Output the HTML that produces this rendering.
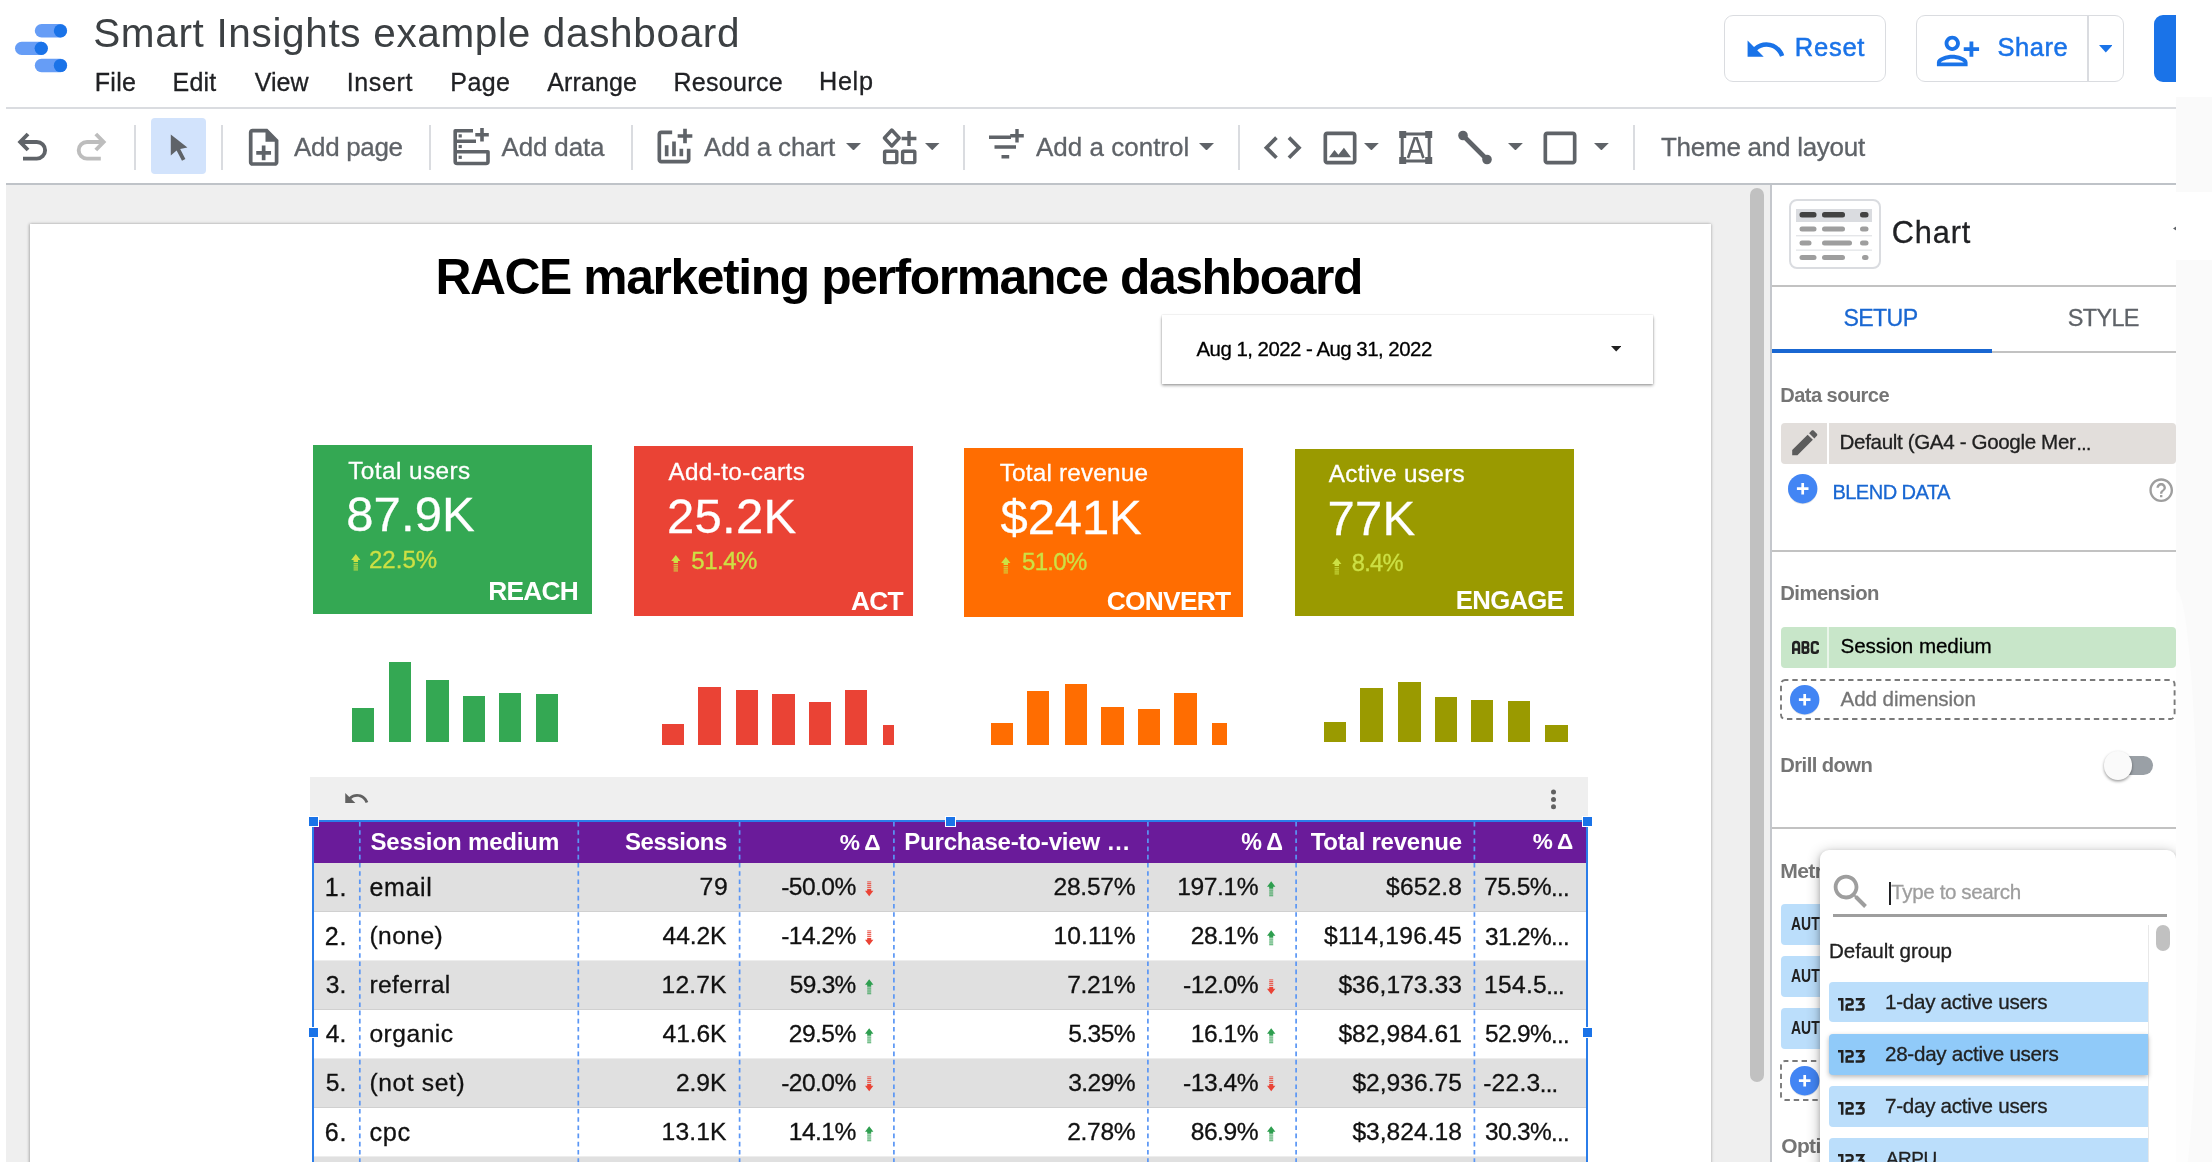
<!DOCTYPE html>
<html><head><meta charset="utf-8"><title>Smart Insights example dashboard</title>
<style>
html,body{margin:0;padding:0;background:#fff;}
body{width:2212px;height:1162px;overflow:hidden;position:relative;font-family:"Liberation Sans", sans-serif;}
#r{position:absolute;left:0;top:0;width:2212px;height:1162px;overflow:hidden;will-change:transform;}
#r div,#r svg,#r span{position:absolute;box-sizing:border-box;}
#r span{white-space:nowrap;line-height:1;-webkit-text-stroke:0.3px currentColor;}
</style></head>
<body><div id="r">
<div style="left:6px;top:106.5px;width:2170px;height:2px;background:#dadce0;"></div>
<div style="left:6px;top:183px;width:2170px;height:2px;background:#bfc3c8;"></div>
<div style="left:2176px;top:97px;width:36px;height:95px;background:#fafafa;"></div>
<div style="left:6px;top:185px;width:1765px;height:980px;background:#efefef;"></div>
<div style="left:30px;top:223.5px;width:1681px;height:945px;background:#ffffff;box-shadow:0 0 4px rgba(0,0,0,.13),-1px 0 2.5px rgba(0,0,0,.2),1px 0 2px rgba(0,0,0,.08);"></div>
<div style="left:1749.5px;top:188px;width:14.5px;height:894px;background:#c1c1c1;border-radius:7px;"></div>
<div style="left:1770px;top:185px;width:2px;height:980px;background:#c4c7cc;"></div>
<div style="left:1772px;top:185px;width:404px;height:980px;background:#ffffff;"></div>
<svg style="left:10px;top:18px;" width="64" height="60" viewBox="10 18 64 60">
<rect x="34.8" y="24" width="32.4" height="13.6" rx="6.8" fill="#669df6"/>
<circle cx="60.4" cy="30.8" r="6.6" fill="#1a73e8"/>
<rect x="15" y="41.7" width="32.9" height="13.2" rx="6.6" fill="#669df6"/>
<circle cx="41.2" cy="48.3" r="6.6" fill="#1a73e8"/>
<rect x="34.8" y="58.8" width="32.4" height="13.4" rx="6.7" fill="#669df6"/>
<circle cx="60.4" cy="65.5" r="6.6" fill="#1a73e8"/>
</svg>
<span style="left:93.2px;top:12.9px;font-size:40.50px;color:#3c4043;letter-spacing:0.661px;-webkit-text-stroke:0;">Smart Insights example dashboard</span>
<span style="left:94.7px;top:69.5px;font-size:25.00px;color:#202124;letter-spacing:0.307px;">File</span>
<span style="left:172.5px;top:69.5px;font-size:25.00px;color:#202124;letter-spacing:0.222px;">Edit</span>
<span style="left:254.7px;top:69.5px;font-size:25.00px;color:#202124;letter-spacing:0.006px;">View</span>
<span style="left:346.7px;top:69.5px;font-size:25.00px;color:#202124;letter-spacing:0.664px;">Insert</span>
<span style="left:450.3px;top:69.5px;font-size:25.00px;color:#202124;letter-spacing:0.406px;">Page</span>
<span style="left:547.3px;top:69.5px;font-size:25.00px;color:#202124;letter-spacing:0.127px;">Arrange</span>
<span style="left:673.4px;top:69.5px;font-size:25.00px;color:#202124;letter-spacing:0.316px;">Resource</span>
<span style="left:819.0px;top:69.4px;font-size:25.19px;color:#202124;letter-spacing:0.705px;">Help</span>
<div style="left:1723.5px;top:15px;width:162px;height:66.5px;border:1.5px solid #dadce0;border-radius:9px;background:#fff"></div>
<svg style="left:1743.5px;top:27.5px;" width="43" height="43" viewBox="0 0 24 24"><path fill="#1a73e8" d="M12.5 8c-2.65 0-5.05.99-6.9 2.6L2 7v9h9l-3.62-3.62c1.39-1.16 3.16-1.88 5.12-1.88 3.54 0 6.55 2.31 7.6 5.5l2.37-.78C21.08 11.03 17.15 8 12.5 8z"/></svg>
<span style="left:1794.8px;top:34.7px;font-size:25.58px;color:#1a73e8;letter-spacing:0.716px;-webkit-text-stroke:0.5px #1a73e8;">Reset</span>
<div style="left:1915.5px;top:15px;width:208.5px;height:66.5px;border:1.5px solid #dadce0;border-radius:9px;background:#fff"></div>
<div style="left:2087px;top:16px;width:1.5px;height:64.5px;background:#dadce0;"></div>
<svg style="left:1934.5px;top:27.5px;" width="46" height="46" viewBox="0 0 24 24"><path fill="#1a73e8" d="M13 8c0-2.21-1.79-4-4-4S5 5.79 5 8s1.79 4 4 4 4-1.79 4-4zm-2 0c0 1.1-.9 2-2 2s-2-.9-2-2 .9-2 2-2 2 .9 2 2zM1 18v2h16v-2c0-2.66-5.33-4-8-4s-8 1.34-8 4zm2 0c.2-.71 3.3-2 6-2 2.69 0 5.78 1.28 6 2H3zm17-3v-3h3v-2h-3V7h-2v3h-3v2h3v3h2z"/></svg>
<span style="left:1997.6px;top:34.8px;font-size:25.50px;color:#1a73e8;letter-spacing:0.484px;-webkit-text-stroke:0.5px #1a73e8;">Share</span>
<svg style="left:2098.5px;top:45px;" width="13.6" height="7.6" viewBox="0 0 10 5.6"><path fill="#1a73e8" d="M0 0h10L5 5.6z"/></svg>
<div style="left:2153.5px;top:15px;width:40px;height:66.5px;border-radius:9px;background:#1a73e8"></div>
<div style="left:2176px;top:0px;width:36px;height:97px;background:#ffffff;"></div>
<svg style="left:14px;top:128px;" width="38" height="38" viewBox="14 128 38 38"><path d="M28 134 L20.2 142 L28 150 M21 142 H36.8 a8.3 8.3 0 0 1 0 16.6 H23" fill="none" stroke="#5f6368" stroke-width="3.9" stroke-linejoin="miter"/></svg>
<svg style="left:72px;top:128px;" width="38" height="38" viewBox="72 128 38 38"><path d="M95.8 134 L103.6 142 L95.8 150 M102.8 142 H87 a8.3 8.3 0 0 0 0 16.6 H100.8" fill="none" stroke="#bdbdbd" stroke-width="3.9" stroke-linejoin="miter"/></svg>
<div style="left:134px;top:125px;width:2px;height:45px;background:#dadce0;"></div>
<div style="left:151px;top:118px;width:55px;height:55.8px;border-radius:4px;background:#d2e3fc"></div>
<svg style="left:168px;top:132px;" width="24" height="32" viewBox="168 132 24 32"><path fill="#5f6368" d="M170.8 134.6 L170.8 155.6 L176.6 150.6 L182 160.8 L185.4 159 L180.2 149 L187.4 147.6 Z"/></svg>
<div style="left:221px;top:125px;width:2px;height:45px;background:#dadce0;"></div>
<svg style="left:246.9px;top:127.2px;" width="33.3" height="40.7" viewBox="3 1 18 22"><path fill="#5f6368" d="M13 11h-2v3H8v2h3v3h2v-3h3v-2h-3zm1-9H6c-1.1 0-2 .9-2 2v16c0 1.1.89 2 1.99 2H18c1.1 0 2-.9 2-2V8l-6-6zm4 18H6V4h7v5h5v11z"/></svg>
<span style="left:294.0px;top:134.0px;font-size:26.00px;color:#5f6368;letter-spacing:-0.338px;">Add page</span>
<div style="left:429px;top:125px;width:2px;height:45px;background:#dadce0;"></div>
<svg style="left:450px;top:126px;" width="42" height="42" viewBox="450 126 42 42">
<g fill="none" stroke="#5f6368" stroke-width="3.6" stroke-linejoin="round">
<path d="M473 130.8 H455.2 V161.5 a2 2 0 0 0 2 2 H486 a2 2 0 0 0 2 -2 V151.8 H455.2 M455.2 141.2 H476"/>
<path d="M482 128 V141.5 M475.3 134.8 H488.8"/>
</g>
<rect x="458.6" y="134.3" width="3.2" height="3.2" fill="#5f6368"/><rect x="458.6" y="144.9" width="3.2" height="3.2" fill="#5f6368"/><rect x="458.6" y="155.7" width="3.2" height="3.2" fill="#5f6368"/>
</svg>
<span style="left:501.5px;top:134.0px;font-size:26.00px;color:#5f6368;letter-spacing:-0.161px;">Add data</span>
<div style="left:631px;top:125px;width:2px;height:45px;background:#dadce0;"></div>
<svg style="left:652px;top:124.5px;" width="44" height="44" viewBox="0 0 24 24"><path fill="#5f6368" d="M22 5v2h-3v3h-2V7h-3V5h3V2h2v3h3zm-3 14H5V5h6V3H5c-1.1 0-2 .9-2 2v14c0 1.1.9 2 2 2h14c1.1 0 2-.9 2-2v-6h-2v6zm-4-6v4h2v-4h-2zm-4 4h2V9h-2v8zm-2 0v-6H7v6h2z"/></svg>
<span style="left:704.0px;top:134.0px;font-size:26.00px;color:#5f6368;letter-spacing:-0.175px;">Add a chart</span>
<svg style="left:846px;top:142.5px;" width="15" height="7.5" viewBox="0 0 10 5"><path fill="#5f6368" d="M0 0h10L5 5z"/></svg>
<svg style="left:880px;top:126px;" width="40" height="40" viewBox="880 126 40 40">
<g fill="none" stroke="#5f6368" stroke-width="3.4" stroke-linejoin="round">
<path d="M891.8 130 L899.2 138 L891.8 146 L884.4 138 Z"/>
<rect x="884.6" y="151.2" width="12.2" height="11.4" rx="1"/>
<rect x="902.6" y="151.2" width="12.2" height="11.4" rx="1"/>
<path d="M909 131 V146 M901.6 138.5 H916.4"/>
</g></svg>
<svg style="left:925px;top:142.5px;" width="14.5" height="7.25" viewBox="0 0 10 5"><path fill="#5f6368" d="M0 0h10L5 5z"/></svg>
<div style="left:963px;top:125px;width:2px;height:45px;background:#dadce0;"></div>
<svg style="left:986px;top:126px;" width="42" height="38" viewBox="986 126 42 38">
<g fill="none" stroke="#5f6368" stroke-width="3.4">
<path d="M989 137.3 H1011 M994.5 147 H1016 M1001.5 156.7 H1009.2"/>
<path d="M1017 129 V142.6 M1010.2 135.8 H1023.8"/>
</g></svg>
<span style="left:1036.0px;top:134.0px;font-size:26.00px;color:#5f6368;letter-spacing:0.006px;">Add a control</span>
<svg style="left:1199px;top:142.5px;" width="15" height="7.5" viewBox="0 0 10 5"><path fill="#5f6368" d="M0 0h10L5 5z"/></svg>
<div style="left:1237.5px;top:125px;width:2px;height:45px;background:#dadce0;"></div>
<svg style="left:1259.5px;top:124.8px;" width="45.4" height="45.4" viewBox="0 0 24 24"><path fill="#5f6368" d="M9.4 16.6L4.8 12l4.6-4.6L8 6l-6 6 6 6 1.4-1.4zm5.2 0l4.6-4.6-4.6-4.6L16 6l6 6-6 6-1.4-1.4z"/></svg>
<svg style="left:1317.5px;top:125.5px;" width="44" height="44" viewBox="0 0 24 24"><path fill="#5f6368" d="M19 5v14H5V5h14m0-2H5c-1.1 0-2 .9-2 2v14c0 1.1.9 2 2 2h14c1.1 0 2-.9 2-2V5c0-1.1-.9-2-2-2zm-4.86 8.86l-3 3.87L9 13.14 6 17h12l-3.86-5.14z"/></svg>
<svg style="left:1364px;top:142.5px;" width="14.799999999999955" height="7.399999999999977" viewBox="0 0 10 5"><path fill="#5f6368" d="M0 0h10L5 5z"/></svg>
<svg style="left:1397px;top:129px;" width="38" height="38" viewBox="1397 129 38 38">
<rect x="1402.2" y="134" width="27" height="27" fill="none" stroke="#5f6368" stroke-width="3"/>
<g fill="#5f6368"><rect x="1399.2" y="131" width="7" height="7"/><rect x="1425.2" y="131" width="7" height="7"/><rect x="1399.2" y="157" width="7" height="7"/><rect x="1425.2" y="157" width="7" height="7"/></g>
<path d="M1408 158 L1414.6 138.2 H1416.8 L1423.4 158 M1410.6 151.4 H1420.8" fill="none" stroke="#5f6368" stroke-width="2.6"/>
</svg>
<svg style="left:1455px;top:128px;" width="40" height="40" viewBox="1455 128 40 40"><path d="M1463 135.5 L1487 159.5" stroke="#5f6368" stroke-width="4.6" fill="none"/><circle cx="1463" cy="135.5" r="4.8" fill="#5f6368"/><circle cx="1487" cy="159.5" r="4.8" fill="#5f6368"/></svg>
<svg style="left:1508.4px;top:142.5px;" width="14.899999999999864" height="7.449999999999932" viewBox="0 0 10 5"><path fill="#5f6368" d="M0 0h10L5 5z"/></svg>
<svg style="left:1538px;top:125.5px;" width="44" height="44" viewBox="0 0 24 24"><path fill="#5f6368" d="M19 5v14H5V5h14m0-2H5c-1.1 0-2 .9-2 2v14c0 1.1.9 2 2 2h14c1.1 0 2-.9 2-2V5c0-1.1-.9-2-2-2z"/></svg>
<svg style="left:1594px;top:142.5px;" width="14.799999999999955" height="7.399999999999977" viewBox="0 0 10 5"><path fill="#5f6368" d="M0 0h10L5 5z"/></svg>
<div style="left:1632.5px;top:125px;width:2px;height:45px;background:#dadce0;"></div>
<span style="left:1661.0px;top:134.0px;font-size:26.00px;color:#5f6368;letter-spacing:-0.260px;">Theme and layout</span>
<span style="left:435.4px;top:253.0px;font-size:49.81px;font-weight:700;-webkit-text-stroke:0;color:#000000;letter-spacing:-1.395px;">RACE marketing performance dashboard</span>
<div style="left:1162.3px;top:314.6px;width:491px;height:69.6px;background:#fff;box-shadow:0 1.5px 3px rgba(0,0,0,.38),0 0 1.5px rgba(0,0,0,.18);"></div>
<span style="left:1196.5px;top:339.3px;font-size:20.40px;color:#000000;letter-spacing:-0.503px;">Aug 1, 2022 - Aug 31, 2022</span>
<svg style="left:1611px;top:346.3px;" width="10.4" height="5.6" viewBox="0 0 10 5.4"><path fill="#212121" d="M0 0h10L5 5.4z"/></svg>
<div style="left:313px;top:444.8px;width:279px;height:169.7px;background:#34a853;"></div>
<span style="left:348.2px;top:458.5px;font-size:24.30px;color:#ffffff;letter-spacing:0.446px;">Total users</span>
<span style="left:346.2px;top:490.4px;font-size:49.00px;color:#ffffff;letter-spacing:0.108px;">87.9K</span>
<svg style="left:350.6px;top:554.0999999999999px;overflow:visible;" width="9.6" height="16.6" viewBox="0 0 10 18"><path fill="#cde044" d="M5 0 L10 6.6 H7.4 V8.8 H2.6 V6.6 H0 Z"/><g fill="#cde044" opacity=".82"><rect x="2.6" y="9.8" width="4.8" height="1.5"/><rect x="2.6" y="12.1" width="4.8" height="1.5"/><rect x="2.6" y="14.4" width="4.8" height="1.5"/><rect x="2.6" y="16.6" width="4.8" height="1.3"/></g></svg>
<span style="left:369.0px;top:548.0px;font-size:24.00px;color:#cde044;letter-spacing:0.022px;">22.5%</span>
<span style="left:488.3px;top:578.2px;font-size:26.29px;font-weight:700;-webkit-text-stroke:0;color:#ffffff;letter-spacing:-0.736px;">REACH</span>
<div style="left:633.7px;top:446.3px;width:279px;height:169.4px;background:#ea4335;"></div>
<span style="left:668.4px;top:460.0px;font-size:24.30px;color:#ffffff;letter-spacing:0.375px;">Add-to-carts</span>
<span style="left:667.0px;top:491.9px;font-size:49.00px;color:#ffffff;letter-spacing:0.258px;">25.2K</span>
<svg style="left:671.3px;top:555.1999999999999px;overflow:visible;" width="9.6" height="16.6" viewBox="0 0 10 18"><path fill="#cde044" d="M5 0 L10 6.6 H7.4 V8.8 H2.6 V6.6 H0 Z"/><g fill="#cde044" opacity=".82"><rect x="2.6" y="9.8" width="4.8" height="1.5"/><rect x="2.6" y="12.1" width="4.8" height="1.5"/><rect x="2.6" y="14.4" width="4.8" height="1.5"/><rect x="2.6" y="16.6" width="4.8" height="1.3"/></g></svg>
<span style="left:691.3px;top:549.1px;font-size:24.00px;color:#cde044;letter-spacing:-0.503px;">51.4%</span>
<span style="left:851.0px;top:588.0px;font-size:26.31px;font-weight:700;-webkit-text-stroke:0;color:#ffffff;letter-spacing:-0.737px;">ACT</span>
<div style="left:963.9px;top:447.5px;width:279.5px;height:169.5px;background:#ff6d01;"></div>
<span style="left:999.7px;top:461.2px;font-size:24.30px;color:#ffffff;letter-spacing:0.195px;">Total revenue</span>
<span style="left:1000.6px;top:493.4px;font-size:49.00px;color:#ffffff;letter-spacing:-0.151px;">$241K</span>
<svg style="left:1001.2px;top:556.5px;overflow:visible;" width="9.6" height="16.6" viewBox="0 0 10 18"><path fill="#cde044" d="M5 0 L10 6.6 H7.4 V8.8 H2.6 V6.6 H0 Z"/><g fill="#cde044" opacity=".82"><rect x="2.6" y="9.8" width="4.8" height="1.5"/><rect x="2.6" y="12.1" width="4.8" height="1.5"/><rect x="2.6" y="14.4" width="4.8" height="1.5"/><rect x="2.6" y="16.6" width="4.8" height="1.3"/></g></svg>
<span style="left:1022.0px;top:550.4px;font-size:23.99px;color:#cde044;letter-spacing:-0.672px;">51.0%</span>
<span style="left:1106.7px;top:587.9px;font-size:26.39px;font-weight:700;-webkit-text-stroke:0;color:#ffffff;letter-spacing:-0.739px;">CONVERT</span>
<div style="left:1294.5px;top:449px;width:279.2px;height:166.7px;background:#9a9a00;"></div>
<span style="left:1328.8px;top:462.1px;font-size:24.30px;color:#ffffff;letter-spacing:0.329px;">Active users</span>
<span style="left:1327.4px;top:494.3px;font-size:49.00px;color:#ffffff;letter-spacing:0.249px;">77K</span>
<svg style="left:1331.5px;top:558.0px;overflow:visible;" width="9.6" height="16.6" viewBox="0 0 10 18"><path fill="#cde044" d="M5 0 L10 6.6 H7.4 V8.8 H2.6 V6.6 H0 Z"/><g fill="#cde044" opacity=".82"><rect x="2.6" y="9.8" width="4.8" height="1.5"/><rect x="2.6" y="12.1" width="4.8" height="1.5"/><rect x="2.6" y="14.4" width="4.8" height="1.5"/><rect x="2.6" y="16.6" width="4.8" height="1.3"/></g></svg>
<span style="left:1351.7px;top:552.1px;font-size:23.70px;color:#cde044;letter-spacing:-0.664px;">8.4%</span>
<span style="left:1455.8px;top:588.4px;font-size:25.78px;font-weight:700;-webkit-text-stroke:0;color:#ffffff;letter-spacing:-0.722px;">ENGAGE</span>
<div style="left:352.1px;top:708px;width:22.3px;height:34px;background:#34a853;"></div>
<div style="left:388.5px;top:661.8px;width:22.3px;height:80.2px;background:#34a853;"></div>
<div style="left:426.4px;top:680px;width:22.3px;height:62px;background:#34a853;"></div>
<div style="left:462.8px;top:695.5px;width:22.3px;height:46.5px;background:#34a853;"></div>
<div style="left:499.2px;top:692.8px;width:22.3px;height:49.2px;background:#34a853;"></div>
<div style="left:535.6px;top:694px;width:22.3px;height:48px;background:#34a853;"></div>
<div style="left:661.5px;top:723.5px;width:22.4px;height:21.5px;background:#ea4335;"></div>
<div style="left:698.2px;top:686.8px;width:22.4px;height:58.2px;background:#ea4335;"></div>
<div style="left:735.8px;top:689.8px;width:22.4px;height:55.2px;background:#ea4335;"></div>
<div style="left:772.2px;top:694px;width:22.4px;height:51px;background:#ea4335;"></div>
<div style="left:808.6px;top:702.4px;width:22.4px;height:42.6px;background:#ea4335;"></div>
<div style="left:845px;top:689.8px;width:22.4px;height:55.2px;background:#ea4335;"></div>
<div style="left:882.9px;top:725px;width:11.3px;height:20px;background:#ea4335;"></div>
<div style="left:990.7px;top:723.3px;width:22.4px;height:21.7px;background:#ff6d01;"></div>
<div style="left:1027.1px;top:691.3px;width:22.4px;height:53.7px;background:#ff6d01;"></div>
<div style="left:1065px;top:684.2px;width:22.4px;height:60.8px;background:#ff6d01;"></div>
<div style="left:1101.4px;top:706.5px;width:22.4px;height:38.5px;background:#ff6d01;"></div>
<div style="left:1137.8px;top:709.2px;width:22.4px;height:35.8px;background:#ff6d01;"></div>
<div style="left:1174.2px;top:692.8px;width:22.4px;height:52.2px;background:#ff6d01;"></div>
<div style="left:1211.8px;top:723.3px;width:15.5px;height:21.7px;background:#ff6d01;"></div>
<div style="left:1324px;top:721.8px;width:22.4px;height:20.2px;background:#9a9a00;"></div>
<div style="left:1360.4px;top:688.3px;width:22.4px;height:53.7px;background:#9a9a00;"></div>
<div style="left:1398.3px;top:681.5px;width:22.4px;height:60.5px;background:#9a9a00;"></div>
<div style="left:1434.7px;top:696.7px;width:22.4px;height:45.3px;background:#9a9a00;"></div>
<div style="left:1471.1px;top:699.7px;width:22.4px;height:42.3px;background:#9a9a00;"></div>
<div style="left:1507.5px;top:700.9px;width:22.4px;height:41.1px;background:#9a9a00;"></div>
<div style="left:1545.4px;top:724.7px;width:22.4px;height:17.3px;background:#9a9a00;"></div>
<div style="left:310.3px;top:776.7px;width:1278.2px;height:45px;background:#efefef;"></div>
<svg style="left:343px;top:785.2px;" width="27" height="27" viewBox="0 0 24 24"><path fill="#616161" d="M12.5 8c-2.65 0-5.05.99-6.9 2.6L2 7v9h9l-3.62-3.62c1.39-1.16 3.16-1.88 5.12-1.88 3.54 0 6.55 2.31 7.6 5.5l2.37-.78C21.08 11.03 17.15 8 12.5 8z"/></svg>
<svg style="left:1550px;top:789px;" width="7" height="21" viewBox="0 0 7 21"><circle cx="3.5" cy="3" r="2.5" fill="#616161"/><circle cx="3.5" cy="10.4" r="2.5" fill="#616161"/><circle cx="3.5" cy="17.8" r="2.5" fill="#616161"/></svg>
<div style="left:313.4px;top:821.8px;width:1272.8000000000002px;height:41.40000000000009px;background:#6a1b9a;"></div>
<div style="left:313.4px;top:863.2px;width:1272.8000000000002px;height:49.19999999999993px;background:#e0e0e0;"></div>
<div style="left:313.4px;top:911.1999999999999px;width:1272.8000000000002px;height:1.2px;background:rgba(0,0,0,.07);"></div>
<div style="left:313.4px;top:912.4px;width:1272.8000000000002px;height:48.89999999999998px;background:#ffffff;"></div>
<div style="left:313.4px;top:960.0999999999999px;width:1272.8000000000002px;height:1.2px;background:rgba(0,0,0,.07);"></div>
<div style="left:313.4px;top:961.3px;width:1272.8000000000002px;height:48.90000000000009px;background:#e0e0e0;"></div>
<div style="left:313.4px;top:1009.0px;width:1272.8000000000002px;height:1.2px;background:rgba(0,0,0,.07);"></div>
<div style="left:313.4px;top:1010.2px;width:1272.8000000000002px;height:48.700000000000045px;background:#ffffff;"></div>
<div style="left:313.4px;top:1057.7px;width:1272.8000000000002px;height:1.2px;background:rgba(0,0,0,.07);"></div>
<div style="left:313.4px;top:1058.9px;width:1272.8000000000002px;height:49.399999999999864px;background:#e0e0e0;"></div>
<div style="left:313.4px;top:1107.1px;width:1272.8000000000002px;height:1.2px;background:rgba(0,0,0,.07);"></div>
<div style="left:313.4px;top:1108.3px;width:1272.8000000000002px;height:48.600000000000136px;background:#ffffff;"></div>
<div style="left:313.4px;top:1155.7px;width:1272.8000000000002px;height:1.2px;background:rgba(0,0,0,.07);"></div>
<div style="left:313.4px;top:1156.9px;width:1272.8000000000002px;height:49.09999999999991px;background:#e0e0e0;"></div>
<div style="left:313.4px;top:1204.8px;width:1272.8000000000002px;height:1.2px;background:rgba(0,0,0,.07);"></div>
<span style="left:370.4px;top:830.0px;font-size:24.00px;font-weight:700;-webkit-text-stroke:0;color:#ffffff;letter-spacing:-0.145px;">Session medium</span>
<span style="left:624.9px;top:830.0px;font-size:24.00px;font-weight:700;-webkit-text-stroke:0;color:#ffffff;letter-spacing:-0.420px;">Sessions</span>
<span style="left:839.8px;top:831.0px;font-size:22.76px;font-weight:700;-webkit-text-stroke:0;color:#ffffff;letter-spacing:-0.637px;">% Δ</span>
<span style="left:904.2px;top:830.0px;font-size:24.00px;font-weight:700;-webkit-text-stroke:0;color:#ffffff;letter-spacing:-0.188px;">Purchase-to-view …</span>
<span style="left:1241.2px;top:830.6px;font-size:23.31px;font-weight:700;-webkit-text-stroke:0;color:#ffffff;letter-spacing:-0.653px;">% Δ</span>
<span style="left:1310.7px;top:830.0px;font-size:24.00px;font-weight:700;-webkit-text-stroke:0;color:#ffffff;letter-spacing:-0.235px;">Total revenue</span>
<span style="left:1532.8px;top:831.2px;font-size:22.59px;font-weight:700;-webkit-text-stroke:0;color:#ffffff;letter-spacing:-0.633px;">% Δ</span>
<span style="left:324.8px;top:874.8px;font-size:25.05px;color:#111111;letter-spacing:0.701px;">1.</span>
<span style="left:369.4px;top:874.9px;font-size:24.91px;color:#111111;letter-spacing:0.697px;">email</span>
<span style="left:699.5px;top:875.1px;font-size:24.72px;color:#111111;letter-spacing:0.692px;">79</span>
<span style="left:781.2px;top:875.2px;font-size:24.60px;color:#111111;letter-spacing:-0.571px;">-50.0%</span>
<svg style="left:864.7px;top:880.6px;overflow:visible;" width="8.4" height="15.6" viewBox="0 0 10 18"><path fill="#ea4335" d="M5 18 L10 11.4 H7.4 V9.2 H2.6 V11.4 H0 Z"/><g fill="#ea4335" opacity=".82"><rect x="2.6" y="6.7" width="4.8" height="1.5"/><rect x="2.6" y="4.4" width="4.8" height="1.5"/><rect x="2.6" y="2.1" width="4.8" height="1.5"/><rect x="2.6" y="0.1" width="4.8" height="1.3"/></g></svg>
<span style="left:1053.6px;top:875.2px;font-size:24.60px;color:#111111;letter-spacing:-0.289px;">28.57%</span>
<span style="left:1177.3px;top:875.2px;font-size:24.60px;color:#111111;letter-spacing:-0.429px;">197.1%</span>
<svg style="left:1266.5px;top:880.6px;overflow:visible;" width="8.4" height="15.6" viewBox="0 0 10 18"><path fill="#2e9e4f" d="M5 0 L10 6.6 H7.4 V8.8 H2.6 V6.6 H0 Z"/><g fill="#2e9e4f" opacity=".82"><rect x="2.6" y="9.8" width="4.8" height="1.5"/><rect x="2.6" y="12.1" width="4.8" height="1.5"/><rect x="2.6" y="14.4" width="4.8" height="1.5"/><rect x="2.6" y="16.6" width="4.8" height="1.3"/></g></svg>
<span style="left:1386.1px;top:875.2px;font-size:24.60px;color:#111111;letter-spacing:0.111px;">$652.8</span>
<span style="left:1484.1px;top:875.2px;font-size:24.60px;color:#111111;letter-spacing:-0.542px;">75.5%</span>
<span style="left:1551.0px;top:875.8px;font-size:23.81px;color:#111111;letter-spacing:-0.667px;">...</span>
<span style="left:324.8px;top:924.0px;font-size:25.05px;color:#111111;letter-spacing:0.701px;">2.</span>
<span style="left:369.4px;top:924.4px;font-size:24.60px;color:#111111;letter-spacing:0.460px;">(none)</span>
<span style="left:662.6px;top:924.4px;font-size:24.60px;color:#111111;letter-spacing:-0.117px;">44.2K</span>
<span style="left:781.2px;top:924.4px;font-size:24.60px;color:#111111;letter-spacing:-0.571px;">-14.2%</span>
<svg style="left:864.7px;top:929.8px;overflow:visible;" width="8.4" height="15.6" viewBox="0 0 10 18"><path fill="#ea4335" d="M5 18 L10 11.4 H7.4 V9.2 H2.6 V11.4 H0 Z"/><g fill="#ea4335" opacity=".82"><rect x="2.6" y="6.7" width="4.8" height="1.5"/><rect x="2.6" y="4.4" width="4.8" height="1.5"/><rect x="2.6" y="2.1" width="4.8" height="1.5"/><rect x="2.6" y="0.1" width="4.8" height="1.3"/></g></svg>
<span style="left:1053.6px;top:924.4px;font-size:24.60px;color:#111111;letter-spacing:0.076px;">10.11%</span>
<span style="left:1190.7px;top:924.4px;font-size:24.60px;color:#111111;letter-spacing:-0.467px;">28.1%</span>
<svg style="left:1266.5px;top:929.8px;overflow:visible;" width="8.4" height="15.6" viewBox="0 0 10 18"><path fill="#2e9e4f" d="M5 0 L10 6.6 H7.4 V8.8 H2.6 V6.6 H0 Z"/><g fill="#2e9e4f" opacity=".82"><rect x="2.6" y="9.8" width="4.8" height="1.5"/><rect x="2.6" y="12.1" width="4.8" height="1.5"/><rect x="2.6" y="14.4" width="4.8" height="1.5"/><rect x="2.6" y="16.6" width="4.8" height="1.3"/></g></svg>
<span style="left:1324.1px;top:924.4px;font-size:24.60px;color:#111111;letter-spacing:0.284px;">$114,196.45</span>
<span style="left:1485.1px;top:924.5px;font-size:24.45px;color:#111111;letter-spacing:-0.685px;">31.2%</span>
<span style="left:1551.0px;top:925.0px;font-size:23.81px;color:#111111;letter-spacing:-0.667px;">...</span>
<span style="left:325.8px;top:973.3px;font-size:24.60px;color:#111111;letter-spacing:0.022px;">3.</span>
<span style="left:369.4px;top:973.3px;font-size:24.60px;color:#111111;letter-spacing:0.423px;">referral</span>
<span style="left:661.6px;top:973.3px;font-size:24.60px;color:#111111;letter-spacing:0.133px;">12.7K</span>
<span style="left:789.8px;top:973.4px;font-size:24.41px;color:#111111;letter-spacing:-0.683px;">59.3%</span>
<svg style="left:864.7px;top:978.6999999999999px;overflow:visible;" width="8.4" height="15.6" viewBox="0 0 10 18"><path fill="#2e9e4f" d="M5 0 L10 6.6 H7.4 V8.8 H2.6 V6.6 H0 Z"/><g fill="#2e9e4f" opacity=".82"><rect x="2.6" y="9.8" width="4.8" height="1.5"/><rect x="2.6" y="12.1" width="4.8" height="1.5"/><rect x="2.6" y="14.4" width="4.8" height="1.5"/><rect x="2.6" y="16.6" width="4.8" height="1.3"/></g></svg>
<span style="left:1067.3px;top:973.3px;font-size:24.60px;color:#111111;letter-spacing:-0.367px;">7.21%</span>
<span style="left:1183.0px;top:973.3px;font-size:24.60px;color:#111111;letter-spacing:-0.471px;">-12.0%</span>
<svg style="left:1266.5px;top:978.6999999999999px;overflow:visible;" width="8.4" height="15.6" viewBox="0 0 10 18"><path fill="#ea4335" d="M5 18 L10 11.4 H7.4 V9.2 H2.6 V11.4 H0 Z"/><g fill="#ea4335" opacity=".82"><rect x="2.6" y="6.7" width="4.8" height="1.5"/><rect x="2.6" y="4.4" width="4.8" height="1.5"/><rect x="2.6" y="2.1" width="4.8" height="1.5"/><rect x="2.6" y="0.1" width="4.8" height="1.3"/></g></svg>
<span style="left:1338.4px;top:973.3px;font-size:24.60px;color:#111111;letter-spacing:0.043px;">$36,173.33</span>
<span style="left:1484.1px;top:973.3px;font-size:24.60px;color:#111111;letter-spacing:0.258px;">154.5</span>
<span style="left:1546.2px;top:973.9px;font-size:23.81px;color:#111111;letter-spacing:-0.667px;">...</span>
<span style="left:325.8px;top:1022.2px;font-size:24.60px;color:#111111;letter-spacing:0.022px;">4.</span>
<span style="left:369.4px;top:1022.2px;font-size:24.60px;color:#111111;letter-spacing:0.506px;">organic</span>
<span style="left:662.6px;top:1022.2px;font-size:24.60px;color:#111111;letter-spacing:-0.117px;">41.6K</span>
<span style="left:788.8px;top:1022.2px;font-size:24.60px;color:#111111;letter-spacing:-0.567px;">29.5%</span>
<svg style="left:864.7px;top:1027.6px;overflow:visible;" width="8.4" height="15.6" viewBox="0 0 10 18"><path fill="#2e9e4f" d="M5 0 L10 6.6 H7.4 V8.8 H2.6 V6.6 H0 Z"/><g fill="#2e9e4f" opacity=".82"><rect x="2.6" y="9.8" width="4.8" height="1.5"/><rect x="2.6" y="12.1" width="4.8" height="1.5"/><rect x="2.6" y="14.4" width="4.8" height="1.5"/><rect x="2.6" y="16.6" width="4.8" height="1.3"/></g></svg>
<span style="left:1068.3px;top:1022.2px;font-size:24.60px;color:#111111;letter-spacing:-0.617px;">5.35%</span>
<span style="left:1190.7px;top:1022.2px;font-size:24.60px;color:#111111;letter-spacing:-0.467px;">16.1%</span>
<svg style="left:1266.5px;top:1027.6px;overflow:visible;" width="8.4" height="15.6" viewBox="0 0 10 18"><path fill="#2e9e4f" d="M5 0 L10 6.6 H7.4 V8.8 H2.6 V6.6 H0 Z"/><g fill="#2e9e4f" opacity=".82"><rect x="2.6" y="9.8" width="4.8" height="1.5"/><rect x="2.6" y="12.1" width="4.8" height="1.5"/><rect x="2.6" y="14.4" width="4.8" height="1.5"/><rect x="2.6" y="16.6" width="4.8" height="1.3"/></g></svg>
<span style="left:1338.4px;top:1022.2px;font-size:24.60px;color:#111111;letter-spacing:0.043px;">$82,984.61</span>
<span style="left:1485.1px;top:1022.3px;font-size:24.45px;color:#111111;letter-spacing:-0.685px;">52.9%</span>
<span style="left:1551.0px;top:1022.8px;font-size:23.81px;color:#111111;letter-spacing:-0.667px;">...</span>
<span style="left:325.8px;top:1070.9px;font-size:24.60px;color:#111111;letter-spacing:0.022px;">5.</span>
<span style="left:369.4px;top:1070.9px;font-size:24.60px;color:#111111;letter-spacing:0.623px;">(not set)</span>
<span style="left:675.9px;top:1070.9px;font-size:24.60px;color:#111111;letter-spacing:-0.030px;">2.9K</span>
<span style="left:781.2px;top:1070.9px;font-size:24.60px;color:#111111;letter-spacing:-0.571px;">-20.0%</span>
<svg style="left:864.7px;top:1076.3px;overflow:visible;" width="8.4" height="15.6" viewBox="0 0 10 18"><path fill="#ea4335" d="M5 18 L10 11.4 H7.4 V9.2 H2.6 V11.4 H0 Z"/><g fill="#ea4335" opacity=".82"><rect x="2.6" y="6.7" width="4.8" height="1.5"/><rect x="2.6" y="4.4" width="4.8" height="1.5"/><rect x="2.6" y="2.1" width="4.8" height="1.5"/><rect x="2.6" y="0.1" width="4.8" height="1.3"/></g></svg>
<span style="left:1068.3px;top:1070.9px;font-size:24.60px;color:#111111;letter-spacing:-0.617px;">3.29%</span>
<span style="left:1183.0px;top:1070.9px;font-size:24.60px;color:#111111;letter-spacing:-0.471px;">-13.4%</span>
<svg style="left:1266.5px;top:1076.3px;overflow:visible;" width="8.4" height="15.6" viewBox="0 0 10 18"><path fill="#ea4335" d="M5 18 L10 11.4 H7.4 V9.2 H2.6 V11.4 H0 Z"/><g fill="#ea4335" opacity=".82"><rect x="2.6" y="6.7" width="4.8" height="1.5"/><rect x="2.6" y="4.4" width="4.8" height="1.5"/><rect x="2.6" y="2.1" width="4.8" height="1.5"/><rect x="2.6" y="0.1" width="4.8" height="1.3"/></g></svg>
<span style="left:1352.4px;top:1070.9px;font-size:24.60px;color:#111111;letter-spacing:0.008px;">$2,936.75</span>
<span style="left:1483.2px;top:1070.9px;font-size:24.60px;color:#111111;letter-spacing:0.230px;">-22.3</span>
<span style="left:1539.7px;top:1071.5px;font-size:23.81px;color:#111111;letter-spacing:-0.667px;">...</span>
<span style="left:324.8px;top:1119.9px;font-size:25.05px;color:#111111;letter-spacing:0.701px;">6.</span>
<span style="left:369.4px;top:1119.7px;font-size:25.34px;color:#111111;letter-spacing:0.709px;">cpc</span>
<span style="left:661.6px;top:1120.3px;font-size:24.60px;color:#111111;letter-spacing:0.133px;">13.1K</span>
<span style="left:788.8px;top:1120.3px;font-size:24.60px;color:#111111;letter-spacing:-0.567px;">14.1%</span>
<svg style="left:864.7px;top:1125.6999999999998px;overflow:visible;" width="8.4" height="15.6" viewBox="0 0 10 18"><path fill="#2e9e4f" d="M5 0 L10 6.6 H7.4 V8.8 H2.6 V6.6 H0 Z"/><g fill="#2e9e4f" opacity=".82"><rect x="2.6" y="9.8" width="4.8" height="1.5"/><rect x="2.6" y="12.1" width="4.8" height="1.5"/><rect x="2.6" y="14.4" width="4.8" height="1.5"/><rect x="2.6" y="16.6" width="4.8" height="1.3"/></g></svg>
<span style="left:1067.3px;top:1120.3px;font-size:24.60px;color:#111111;letter-spacing:-0.367px;">2.78%</span>
<span style="left:1190.7px;top:1120.3px;font-size:24.60px;color:#111111;letter-spacing:-0.467px;">86.9%</span>
<svg style="left:1266.5px;top:1125.6999999999998px;overflow:visible;" width="8.4" height="15.6" viewBox="0 0 10 18"><path fill="#2e9e4f" d="M5 0 L10 6.6 H7.4 V8.8 H2.6 V6.6 H0 Z"/><g fill="#2e9e4f" opacity=".82"><rect x="2.6" y="9.8" width="4.8" height="1.5"/><rect x="2.6" y="12.1" width="4.8" height="1.5"/><rect x="2.6" y="14.4" width="4.8" height="1.5"/><rect x="2.6" y="16.6" width="4.8" height="1.3"/></g></svg>
<span style="left:1352.4px;top:1120.3px;font-size:24.60px;color:#111111;letter-spacing:0.008px;">$3,824.18</span>
<span style="left:1485.1px;top:1120.4px;font-size:24.45px;color:#111111;letter-spacing:-0.685px;">30.3%</span>
<span style="left:1551.0px;top:1120.9px;font-size:23.81px;color:#111111;letter-spacing:-0.667px;">...</span>
<svg style="left:300px;top:820px;" width="1300" height="346" viewBox="300 820 1300 346"><g stroke="#5a96f5" stroke-width="1.7" stroke-dasharray="4.6 3.6" fill="none"><line x1="359.8" y1="822" x2="359.8" y2="1166" /><line x1="578.3" y1="822" x2="578.3" y2="1166" /><line x1="739.6" y1="822" x2="739.6" y2="1166" /><line x1="893.9" y1="822" x2="893.9" y2="1166" /><line x1="1147.9" y1="822" x2="1147.9" y2="1166" /><line x1="1296.1" y1="822" x2="1296.1" y2="1166" /><line x1="1474.4" y1="822" x2="1474.4" y2="1166" /></g></svg>
<div style="left:312.2px;top:819.8px;width:1275.4px;height:360px;border:2.2px solid #2b7de9;"></div>
<div style="left:308.1px;top:815.5px;width:11px;height:11px;background:#1a73e8;border:1.5px solid #fff;"></div>
<div style="left:944.9px;top:815.5px;width:11px;height:11px;background:#1a73e8;border:1.5px solid #fff;"></div>
<div style="left:1581.7px;top:815.5px;width:11px;height:11px;background:#1a73e8;border:1.5px solid #fff;"></div>
<div style="left:308.1px;top:1027.1px;width:11px;height:11px;background:#1a73e8;border:1.5px solid #fff;"></div>
<div style="left:1581.7px;top:1027.1px;width:11px;height:11px;background:#1a73e8;border:1.5px solid #fff;"></div>
<div style="left:1788.8px;top:198.8px;width:92px;height:70px;border:2px solid #dadce0;border-radius:8px;background:#fff"></div>
<svg style="left:1789px;top:199px;" width="92" height="70" viewBox="1789 199 92 70">
<rect x="1796" y="209" width="76" height="13" fill="#dadce0"/>
<g fill="#424242"><rect x="1799.5" y="212" width="17" height="5.4" rx="2.5"/><rect x="1822" y="212" width="23" height="5.4" rx="2.5"/><rect x="1860" y="212" width="8.5" height="5.4" rx="2.5"/></g>
<g fill="#9e9e9e">
<rect x="1799.5" y="226.5" width="17" height="5" rx="2.5"/><rect x="1822" y="226.5" width="23" height="5" rx="2.5"/><rect x="1860" y="226.5" width="8.5" height="5" rx="2.5"/>
<rect x="1799.5" y="240.5" width="12" height="5" rx="2.5"/><rect x="1822" y="240.5" width="30" height="5" rx="2.5"/><rect x="1860" y="240.5" width="8.5" height="5" rx="2.5"/>
<rect x="1799.5" y="255" width="17" height="5" rx="2.5"/><rect x="1822" y="255" width="23" height="5" rx="2.5"/><rect x="1862" y="255" width="6.5" height="5" rx="2.5"/>
</g>
<rect x="1796" y="235.3" width="76" height="1" fill="#dadce0"/><rect x="1796" y="249.6" width="76" height="1" fill="#dadce0"/>
</svg>
<span style="left:1891.8px;top:217.9px;font-size:30.71px;color:#202124;letter-spacing:0.860px;">Chart</span>
<svg style="left:2172.5px;top:225.5px;" width="4" height="5" viewBox="0 0 4 5"><path fill="#5f6368" d="M0 2.5 L4 0 V5z"/></svg>
<div style="left:1772px;top:285px;width:404px;height:1.6px;background:#c2c2c2;"></div>
<span style="left:1843.5px;top:307.0px;font-size:23.16px;color:#1967d2;letter-spacing:-0.649px;">SETUP</span>
<span style="left:2067.8px;top:306.7px;font-size:23.48px;color:#5f6368;letter-spacing:-0.657px;">STYLE</span>
<div style="left:1772px;top:351.2px;width:404px;height:1.8px;background:#c2c2c2;"></div>
<div style="left:1772px;top:349.3px;width:220px;height:4px;background:#1967d2;"></div>
<span style="left:1780.3px;top:385.4px;font-size:20.09px;font-weight:700;-webkit-text-stroke:0;color:#757575;letter-spacing:-0.562px;">Data source</span>
<div style="left:1781.2px;top:423px;width:394.8px;height:40.6px;background:#e2dedb;border-radius:4px;"></div>
<div style="left:1826.6px;top:423px;width:2px;height:40.6px;background:#ffffff;"></div>
<svg style="left:1788px;top:426px;" width="33.5" height="33.5" viewBox="0 0 24 24"><path fill="#5c5c5c" d="M3 17.25V21h3.75L17.81 9.94l-3.75-3.75L3 17.25zM20.71 7.04c.39-.39.39-1.02 0-1.41l-2.34-2.34c-.39-.39-1.02-.39-1.41 0l-1.83 1.83 3.75 3.75 1.83-1.83z"/></svg>
<span style="left:1839.6px;top:432.4px;font-size:20.60px;color:#212121;letter-spacing:-0.361px;">Default (GA4 - Google Mer</span>
<span style="left:2076.5px;top:433.7px;font-size:19.07px;color:#212121;letter-spacing:-0.534px;">...</span>
<svg style="left:1785.3px;top:472.3px;" width="35.4" height="36.4" viewBox="-17.7 -16.7 35.4 36.4"><circle cx="0" cy="0.8" r="14.7" fill="rgba(0,0,0,.10)"/><circle cx="0" cy="0" r="14.7" fill="#4285f4"/><path d="M-5.8 0 H5.8 M0 -5.8 V5.8" stroke="#fff" stroke-width="2.7"/></svg>
<span style="left:1832.4px;top:481.9px;font-size:20.10px;color:#1967d2;letter-spacing:-0.563px;">BLEND DATA</span>
<svg style="left:2146.8px;top:476.4px;" width="28.4" height="28.4" viewBox="0 0 24 24"><path fill="#9e9e9e" d="M11 18h2v-2h-2v2zm1-16C6.48 2 2 6.48 2 12s4.48 10 10 10 10-4.48 10-10S17.52 2 12 2zm0 18c-4.41 0-8-3.59-8-8s3.59-8 8-8 8 3.59 8 8-3.59 8-8 8zm0-14c-2.21 0-4 1.79-4 4h2c0-1.1.9-2 2-2s2 .9 2 2c0 2-3 1.75-3 5h2c0-2.25 3-2.5 3-5 0-2.21-1.79-4-4-4z"/></svg>
<div style="left:1772px;top:550.2px;width:404px;height:1.6px;background:#c2c2c2;"></div>
<span style="left:1780.3px;top:582.9px;font-size:20.27px;font-weight:700;-webkit-text-stroke:0;color:#757575;letter-spacing:-0.568px;">Dimension</span>
<div style="left:1781.2px;top:627px;width:394.8px;height:40.7px;background:#c8e6c9;border-radius:4px;"></div>
<div style="left:1827.1px;top:627px;width:1.9px;height:40.7px;background:#eaf5ea;"></div>
<svg style="left:1791.1px;top:640px;" width="30" height="15" viewBox="-1 -1 30 15"><g fill="none" stroke="#212121" stroke-width="2.5" stroke-linejoin="round">
<path d="M1.25 12.9 V3.9 a2.85 2.85 0 0 1 5.7 0 V12.9 M1.25 8.4 H6.95"/>
<path d="M10.75 0.6 V12.3 M10.75 1.25 H14.1 a2 2 0 0 1 2 2 V4.6 a1.8 1.8 0 0 1 -1.8 1.8 H10.75 M14.3 6.4 a1.9 1.9 0 0 1 1.9 1.9 V9.65 a2 2 0 0 1 -2 2 H10.75"/>
<path d="M25.75 4.1 V3.25 a2 2 0 0 0 -2 -2 H22 a2 2 0 0 0 -2 2 V9.65 a2 2 0 0 0 2 2 H23.75 a2 2 0 0 0 2 -2 V8.8"/>
</g></svg>
<span style="left:1840.5px;top:636.2px;font-size:20.60px;color:#000000;letter-spacing:-0.075px;">Session medium</span>
<svg style="left:1779.4px;top:677.9px;" width="397.6" height="43" viewBox="-1 -1 397.6 43"><rect x="1" y="1" width="393.6" height="39" rx="4" fill="none" stroke="#7a7a7a" stroke-width="1.9" stroke-dasharray="5.4 3.9" stroke-dashoffset="2"/></svg>
<svg style="left:1787.2px;top:682.5999999999999px;" width="35.4" height="36.4" viewBox="-17.7 -16.7 35.4 36.4"><circle cx="0" cy="0.8" r="14.7" fill="rgba(0,0,0,.10)"/><circle cx="0" cy="0" r="14.7" fill="#4285f4"/><path d="M-5.8 0 H5.8 M0 -5.8 V5.8" stroke="#fff" stroke-width="2.7"/></svg>
<span style="left:1840.5px;top:688.5px;font-size:20.60px;color:#757575;letter-spacing:-0.073px;">Add dimension</span>
<span style="left:1780.3px;top:754.9px;font-size:20.19px;font-weight:700;-webkit-text-stroke:0;color:#757575;letter-spacing:-0.565px;">Drill down</span>
<div style="left:2116px;top:755.7px;width:37px;height:19px;border-radius:9.5px;background:#9aa0a6"></div>
<div style="left:2103.8px;top:751px;width:28.6px;height:28.6px;border-radius:50%;background:#fafafa;box-shadow:0 1.5px 3px rgba(0,0,0,.4);"></div>
<div style="left:1772px;top:827px;width:404px;height:1.6px;background:#c2c2c2;"></div>
<span style="left:1780.2px;top:859.6px;font-size:21.14px;font-weight:700;-webkit-text-stroke:0;color:#757575;letter-spacing:-0.592px;">Metric</span>
<div style="left:1781.2px;top:904.4px;width:120px;height:40.5px;background:#bbdefb;border-radius:4px;"></div>
<span style="left:1791.3px;top:915.8px;font-size:17.60px;font-weight:700;-webkit-text-stroke:0;color:#212121;transform:scaleX(0.7937);transform-origin:0 0;">AUT</span>
<div style="left:1781.2px;top:956.2px;width:120px;height:40.5px;background:#bbdefb;border-radius:4px;"></div>
<span style="left:1791.3px;top:967.6px;font-size:17.60px;font-weight:700;-webkit-text-stroke:0;color:#212121;transform:scaleX(0.7937);transform-origin:0 0;">AUT</span>
<div style="left:1781.2px;top:1008.3px;width:120px;height:40.5px;background:#bbdefb;border-radius:4px;"></div>
<span style="left:1791.3px;top:1019.7px;font-size:17.60px;font-weight:700;-webkit-text-stroke:0;color:#212121;transform:scaleX(0.7937);transform-origin:0 0;">AUT</span>
<svg style="left:1779.4px;top:1058.8px;" width="122" height="43" viewBox="-1 -1 122 43"><rect x="1" y="1" width="118" height="39" rx="4" fill="none" stroke="#7a7a7a" stroke-width="1.9" stroke-dasharray="5.4 3.9" stroke-dashoffset="2"/></svg>
<svg style="left:1787.3px;top:1063.7px;" width="35.4" height="36.4" viewBox="-17.7 -16.7 35.4 36.4"><circle cx="0" cy="0.8" r="14.7" fill="rgba(0,0,0,.10)"/><circle cx="0" cy="0" r="14.7" fill="#4285f4"/><path d="M-5.8 0 H5.8 M0 -5.8 V5.8" stroke="#fff" stroke-width="2.7"/></svg>
<span style="left:1781.2px;top:1135.6px;font-size:20.94px;font-weight:700;-webkit-text-stroke:0;color:#757575;letter-spacing:-0.586px;">Optional</span>
<div style="left:1820px;top:850.3px;width:356px;height:330px;background:#fff;border-radius:9px 9px 0 0;box-shadow:0 3px 14px rgba(0,0,0,.30),0 2px 5px rgba(0,0,0,.18);"></div>
<div style="left:2176px;top:192px;width:36px;height:980px;background:#ffffff;"></div>
<div style="left:2176px;top:260px;width:36px;height:910px;background:#fafafa;"></div>
<div style="left:2176px;top:590px;width:22px;height:620px;border-radius:0 100% 100% 0 / 0 50% 50% 0;background:#fdfdfd"></div>
<svg style="left:1827.6px;top:869.3px;" width="45.6" height="45.6" viewBox="0 0 24 24"><path fill="#9e9e9e" d="M15.5 14h-.79l-.28-.27C15.41 12.59 16 11.11 16 9.5 16 5.91 13.09 3 9.5 3S3 5.91 3 9.5 5.91 16 9.5 16c1.61 0 3.09-.59 4.23-1.57l.27.28v.79l5 4.99L20.49 19l-4.99-5zm-6 0C7.01 14 5 11.99 5 9.5S7.01 5 9.5 5 14 7.01 14 9.5 11.99 14 9.5 14z"/></svg>
<div style="left:1888.9px;top:881.8px;width:1.8px;height:23px;background:#202124;"></div>
<span style="left:1891.3px;top:882.1px;font-size:20.60px;color:#9e9e9e;letter-spacing:-0.402px;">Type to search</span>
<div style="left:1833px;top:913.7px;width:334px;height:3.4px;background:#9e9e9e;"></div>
<div style="left:2148.2px;top:925px;width:1.2px;height:240px;background:#e8e8e8;"></div>
<div style="left:2155.5px;top:925px;width:14.7px;height:26px;border-radius:7.4px;background:#c1c1c1"></div>
<span style="left:1829.0px;top:941.0px;font-size:20.60px;color:#212121;letter-spacing:-0.049px;">Default group</span>
<div style="left:1829px;top:981.8px;width:319.2px;height:40.6px;background:#bbdefb;border-radius:4px 0 0 4px;"></div>
<svg style="left:1837px;top:996.6999999999999px;" width="30" height="15" viewBox="-1 -1 30 15"><g fill="none" stroke="#212121" stroke-width="2.5" stroke-linejoin="miter">
<path d="M0 1.25 H4.2 V12.7"/>
<path d="M7.4 1.25 H12.6 a1.9 1.9 0 0 1 1.9 1.9 V4.5 a1.9 1.9 0 0 1 -1.9 1.9 H10.6 a1.9 1.9 0 0 0 -1.9 1.9 V11.45 H15.9"/>
<path d="M17.8 1.25 H25 L22 5.9 H23.6 a1.9 1.9 0 0 1 1.9 1.9 V9.55 a1.9 1.9 0 0 1 -1.9 1.9 H17.6"/>
</g></svg>
<span style="left:1885.0px;top:991.6px;font-size:20.60px;color:#212121;letter-spacing:-0.272px;">1-day active users</span>
<div style="left:1829px;top:1034.2px;width:319.2px;height:40.6px;background:#90caf9;border-radius:4px 0 0 4px;box-shadow:0 2px 5px rgba(0,0,0,.28);"></div>
<svg style="left:1837px;top:1049.1000000000001px;" width="30" height="15" viewBox="-1 -1 30 15"><g fill="none" stroke="#212121" stroke-width="2.5" stroke-linejoin="miter">
<path d="M0 1.25 H4.2 V12.7"/>
<path d="M7.4 1.25 H12.6 a1.9 1.9 0 0 1 1.9 1.9 V4.5 a1.9 1.9 0 0 1 -1.9 1.9 H10.6 a1.9 1.9 0 0 0 -1.9 1.9 V11.45 H15.9"/>
<path d="M17.8 1.25 H25 L22 5.9 H23.6 a1.9 1.9 0 0 1 1.9 1.9 V9.55 a1.9 1.9 0 0 1 -1.9 1.9 H17.6"/>
</g></svg>
<span style="left:1885.0px;top:1044.0px;font-size:20.60px;color:#212121;letter-spacing:-0.271px;">28-day active users</span>
<div style="left:1829px;top:1086.3px;width:319.2px;height:40.6px;background:#bbdefb;border-radius:4px 0 0 4px;"></div>
<svg style="left:1837px;top:1101.2px;" width="30" height="15" viewBox="-1 -1 30 15"><g fill="none" stroke="#212121" stroke-width="2.5" stroke-linejoin="miter">
<path d="M0 1.25 H4.2 V12.7"/>
<path d="M7.4 1.25 H12.6 a1.9 1.9 0 0 1 1.9 1.9 V4.5 a1.9 1.9 0 0 1 -1.9 1.9 H10.6 a1.9 1.9 0 0 0 -1.9 1.9 V11.45 H15.9"/>
<path d="M17.8 1.25 H25 L22 5.9 H23.6 a1.9 1.9 0 0 1 1.9 1.9 V9.55 a1.9 1.9 0 0 1 -1.9 1.9 H17.6"/>
</g></svg>
<span style="left:1885.0px;top:1096.1px;font-size:20.60px;color:#212121;letter-spacing:-0.272px;">7-day active users</span>
<div style="left:1829px;top:1138.4px;width:319.2px;height:40.6px;background:#bbdefb;border-radius:4px 0 0 4px;"></div>
<svg style="left:1837px;top:1153.3000000000002px;" width="30" height="15" viewBox="-1 -1 30 15"><g fill="none" stroke="#212121" stroke-width="2.5" stroke-linejoin="miter">
<path d="M0 1.25 H4.2 V12.7"/>
<path d="M7.4 1.25 H12.6 a1.9 1.9 0 0 1 1.9 1.9 V4.5 a1.9 1.9 0 0 1 -1.9 1.9 H10.6 a1.9 1.9 0 0 0 -1.9 1.9 V11.45 H15.9"/>
<path d="M17.8 1.25 H25 L22 5.9 H23.6 a1.9 1.9 0 0 1 1.9 1.9 V9.55 a1.9 1.9 0 0 1 -1.9 1.9 H17.6"/>
</g></svg>
<span style="left:1886.0px;top:1149.5px;font-size:18.97px;color:#212121;letter-spacing:-0.531px;">ARPU</span>
</div></body></html>
